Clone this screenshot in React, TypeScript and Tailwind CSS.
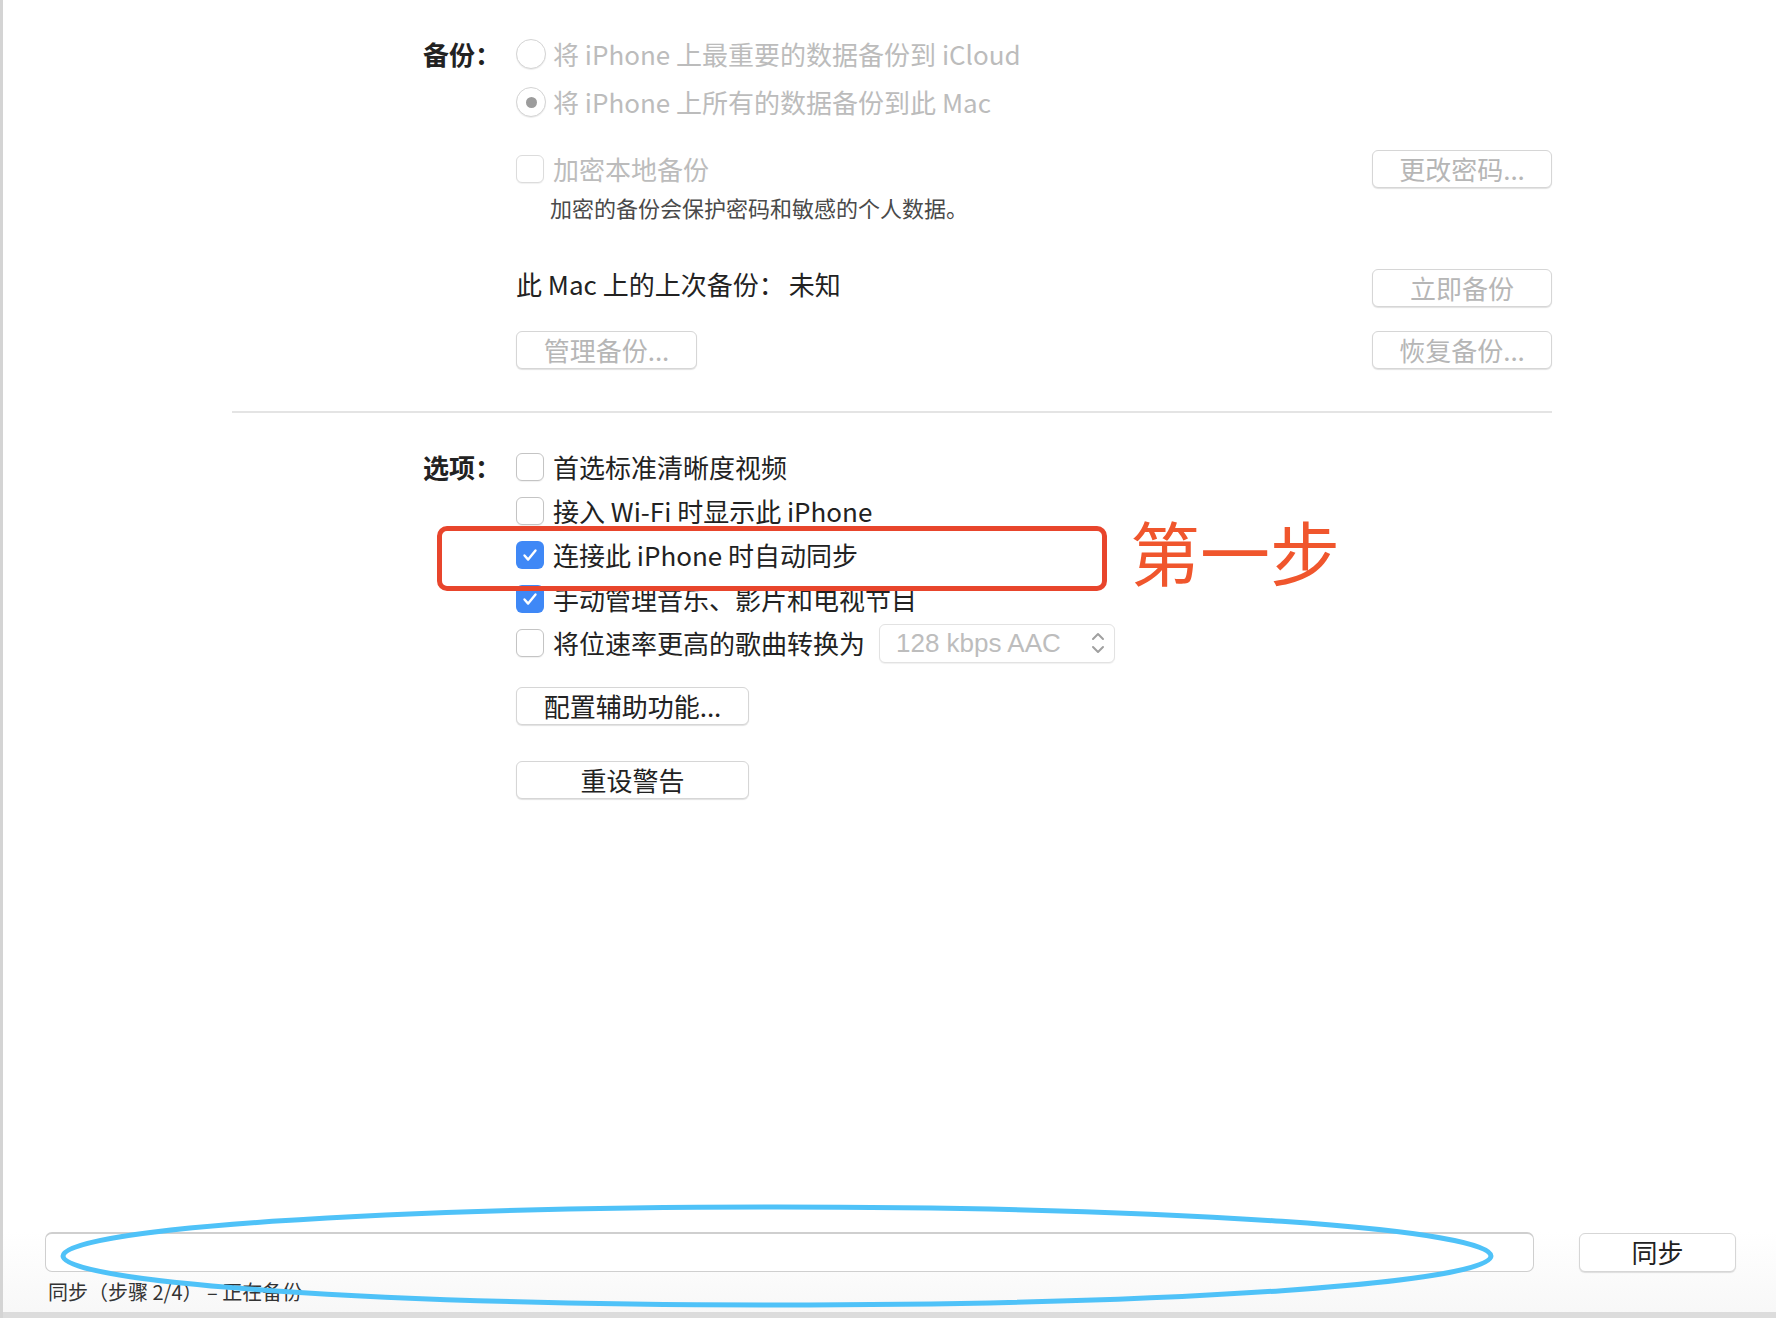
import type { ReactNode } from 'react';

const font = "font-['Noto_Sans_CJK_SC','Noto_Sans',sans-serif]";

function Radio({ selected }: { selected?: boolean }) {
  return (
    <span className="w-[30px] h-[30px] rounded-full border border-[#d4d4d4] bg-white shadow-[0_1px_1px_rgba(0,0,0,0.08)] flex items-center justify-center shrink-0">
      {selected && <span className="w-[11px] h-[11px] rounded-full bg-[#9c9c9c]" />}
    </span>
  );
}

function Checkbox({ checked, disabled }: { checked?: boolean; disabled?: boolean }) {
  if (checked) {
    return (
      <span className="w-[28px] h-[28px] rounded-[6px] bg-[#3f88f6] flex items-center justify-center shrink-0">
        <svg viewBox="0 0 24 24" className="w-[22px] h-[22px]" fill="none" stroke="white" strokeWidth="2.6" strokeLinecap="round" strokeLinejoin="round">
          <path d="M6 12.5l4 4.5 8-10" />
        </svg>
      </span>
    );
  }
  return (
    <span
      className={`w-[28px] h-[28px] rounded-[6px] bg-white border shadow-[0_1px_1px_rgba(0,0,0,0.06)] shrink-0 ${
        disabled ? 'border-[#dcdcdc]' : 'border-[#c4c4c4]'
      }`}
    />
  );
}

function MacButton({ children, disabled, className = '' }: { children: ReactNode; disabled?: boolean; className?: string }) {
  return (
    <div
      className={`h-[38px] rounded-[6px] bg-white border border-[#d6d6d6] shadow-[0_1px_1px_rgba(0,0,0,0.12)] flex items-center justify-center text-[26px] leading-none ${
        disabled ? 'text-[#b6b6b6]' : 'text-[#222]'
      } ${className}`}
    >
      {children}
    </div>
  );
}

function OptionRow({ checked, children }: { checked?: boolean; children: ReactNode }) {
  return (
    <div className="h-[44px] flex items-center gap-[9px] text-[26px] leading-none text-[#222]">
      <Checkbox checked={checked} />
      {children}
    </div>
  );
}

export default function App() {
  return (
    <div className={`relative flex w-full h-[1318px] overflow-hidden bg-white ${font}`}>
      <div className="w-[3px] bg-[#d4d4d4]" />

      <div className="flex-1 flex flex-col">
        <div className="pl-[229px] pr-[224px] pt-[30px]">
          {/* backup section */}
          <section className="flex">
            <div className="w-[284px] pl-[191px]">
              <div className="h-[48px] flex items-center text-[26px] font-semibold text-[#222] leading-none">备份：</div>
            </div>
            <div className="flex-1">
              <div className="h-[48px] flex items-center gap-[7px] text-[26px] leading-none text-[#bcbcbc]">
                <Radio />
                将 iPhone 上最重要的数据备份到 iCloud
              </div>
              <div className="h-[48px] flex items-center gap-[7px] text-[26px] leading-none text-[#bcbcbc]">
                <Radio selected />
                将 iPhone 上所有的数据备份到此 Mac
              </div>

              <div className="mt-[24px] flex items-center justify-between">
                <div className="flex items-center gap-[9px] text-[26px] leading-none text-[#bcbcbc]">
                  <Checkbox disabled />
                  加密本地备份
                </div>
                <MacButton disabled className="w-[180px]">更改密码...</MacButton>
              </div>
              <div className="mt-[4px] h-[30px] pl-[34px] flex items-center text-[22px] leading-none text-[#4a4a4a]">
                加密的备份会保护密码和敏感的个人数据。
              </div>

              <div className="mt-[47px] flex items-center justify-between">
                <div className="pb-[8px] text-[26px] leading-none text-[#222]">
                  此 Mac 上的上次备份：<span className="ml-[4px]">未知</span>
                </div>
                <MacButton disabled className="w-[180px]">立即备份</MacButton>
              </div>

              <div className="mt-[24px] flex items-center justify-between">
                <MacButton disabled className="w-[181px]">管理备份...</MacButton>
                <MacButton disabled className="w-[180px]">恢复备份...</MacButton>
              </div>
            </div>
          </section>

          <div className="mt-[42px] h-[2px] bg-[#e4e4e4]" />

          {/* options section */}
          <section className="flex mt-[32px]">
            <div className="w-[284px] pl-[191px]">
              <div className="h-[44px] flex items-center text-[26px] font-semibold text-[#222] leading-none">选项：</div>
            </div>
            <div className="flex-1">
              <OptionRow>首选标准清晰度视频</OptionRow>
              <OptionRow>接入 Wi-Fi 时显示此 iPhone</OptionRow>
              <OptionRow checked>连接此 iPhone 时自动同步</OptionRow>
              <OptionRow checked>手动管理音乐、影片和电视节目</OptionRow>
              <OptionRow>
                将位速率更高的歌曲转换为
                <div className="ml-[5px] w-[236px] h-[39px] rounded-[6px] border border-[#e2e2e2] bg-white shadow-[0_1px_1px_rgba(0,0,0,0.06)] flex items-center justify-between pl-[16px] pr-[8px] text-[#bdbdbd]">
                  <span className="text-[26px] font-['Liberation_Sans',sans-serif]">128 kbps AAC</span>
                  <svg viewBox="0 0 16 28" className="w-[16px] h-[28px]" fill="none" stroke="#a0a0a0" strokeWidth="2" strokeLinecap="round" strokeLinejoin="round">
                    <path d="M3 10l5-5 5 5" />
                    <path d="M3 18l5 5 5-5" />
                  </svg>
                </div>
              </OptionRow>

              <MacButton className="mt-[22px] w-[233px]">配置辅助功能...</MacButton>
              <MacButton className="mt-[36px] w-[233px]">重设警告</MacButton>
            </div>
          </section>
        </div>

        {/* bottom bar */}
        <div className="mt-auto bg-linear-to-b from-white to-[#f7f7f7]">
          <div className="pl-[42px] pr-[40px] flex items-center gap-[45px]">
            <div className="flex-1 h-[40px] rounded-[7px] border border-[#cfcfcf] border-t-2 bg-white" />
            <MacButton className="w-[157px] h-[39px]">同步</MacButton>
          </div>
          <div className="mt-[7px] mb-[7px] h-[26px] pl-[45px] flex items-center text-[20px] leading-none text-[#333]">
            同步（步骤 2/4） – 正在备份
          </div>
          <div className="h-[6px] bg-[#dcdcdc]" />
        </div>
      </div>

      {/* annotations */}
      <div className="absolute left-[437px] top-[526px] w-[670px] h-[65px] rounded-[10px] border-[5px] border-[#e8452c]" />
      <div className="absolute left-[1130px] top-[516px] text-[70px] leading-none text-[#f0562d]">第一步</div>
      <svg className="absolute left-[58px] top-[1202px]" width="1438" height="108" viewBox="0 0 1438 108" fill="none">
        <ellipse cx="719" cy="54" rx="714" ry="49" stroke="#4fc2f8" strokeWidth="5" />
      </svg>
    </div>
  );
}
